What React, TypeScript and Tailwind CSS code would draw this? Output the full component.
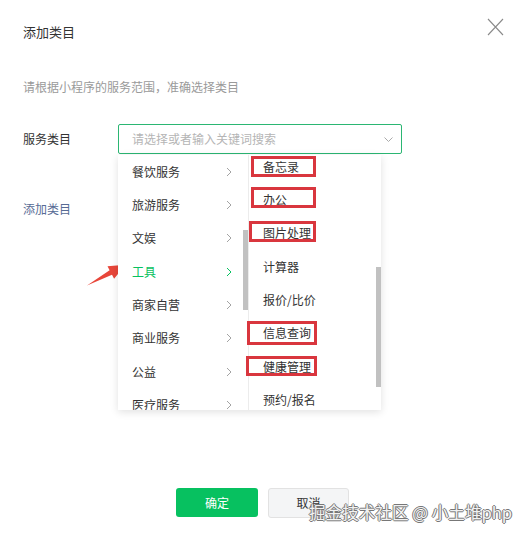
import React from "react";

const leftItems = ["餐饮服务", "旅游服务", "文娱", "工具", "商家自营", "商业服务", "公益", "医疗服务"];

type RightItem = { label: string; box?: string };
const rightItems: RightItem[] = [
  { label: "备忘录", box: "-left-[12px] -right-[17px] -top-[3px] -bottom-[2px]" },
  { label: "办公", box: "-left-[12px] -right-[29px] -top-[5px] bottom-0" },
  { label: "图片处理", box: "-left-[14px] -right-[5px] -top-[4px] -bottom-[1px]" },
  { label: "计算器" },
  { label: "报价/比价" },
  { label: "信息查询", box: "-left-[16px] -right-[6px] -top-[4px] -bottom-[4px]" },
  { label: "健康管理", box: "-left-[17px] -right-[6px] -top-[3px] -bottom-[1px]" },
  { label: "预约/报名" },
];

function Chevron({ active }: { active?: boolean }) {
  return (
    <svg width="6" height="10" viewBox="0 0 6 10" className="shrink-0">
      <path d="M1 1 L5 5 L1 9" fill="none" stroke={active ? "#07c160" : "#a3a3a3"} strokeWidth="1" />
    </svg>
  );
}

export default function App() {
  return (
    <div
      className="relative w-[528px] h-[536px] bg-white overflow-hidden text-[#333]"
      style={{ fontFamily: '"Noto Sans CJK SC", "Noto Sans", sans-serif' }}
    >
      {/* close */}
      <button className="absolute left-[487px] top-[18px] w-[17px] h-[18px]">
        <svg width="17" height="18" viewBox="0 0 17 18">
          <path d="M1 1 L16 17 M16 1 L1 17" stroke="#8a8a8a" strokeWidth="1.1" fill="none" />
        </svg>
      </button>

      <div className="pl-[23px] pt-[22px] flex flex-col">
        <div className="text-[13px] leading-[20px] text-[#333]">添加类目</div>
        <div className="mt-[36px] text-[12px] leading-[18px] text-[#9a9a9a]">请根据小程序的服务范围，准确选择类目</div>

        <div className="mt-[28px] flex items-center">
          <div className="w-[95px] text-[12px] leading-[18px] text-[#333]">服务类目</div>
          <div className="relative w-[284px]">
            <div className="h-[30px] border border-[#2bb673] rounded-[2px] flex items-center justify-between pl-[13px] pr-[8px]">
              <span className="text-[12px] text-[#b5b5b5]">请选择或者输入关键词搜索</span>
              <svg width="9" height="5" viewBox="0 0 9 5">
                <path d="M0.5 0.5 L4.5 4.5 L8.5 0.5" stroke="#aaa" strokeWidth="1" fill="none" />
              </svg>
            </div>

            {/* dropdown */}
            <div className="absolute left-0 top-[31px] z-10 w-[263px] h-[255px] bg-white flex overflow-hidden shadow-[0_2px_8px_rgba(0,0,0,0.12)]">
              <div className="relative w-[131px] h-full overflow-hidden border-r border-[#ececec]">
                {leftItems.map((it) => {
                  const active = it === "工具";
                  return (
                    <div
                      key={it}
                      className="h-[33.33px] flex items-center justify-between pl-[14px] pr-[16px] text-[12px]"
                    >
                      <span className={active ? "text-[#07c160]" : "text-[#333]"}>{it}</span>
                      <Chevron active={active} />
                    </div>
                  );
                })}
                <div className="absolute right-0 top-[75px] w-[5px] h-[80px] bg-[#c1c1c1]" />
              </div>
              <div className="relative w-[132px] h-full">
                <div className="mt-[-5px]">
                  {rightItems.map((it) => (
                    <div key={it.label} className="h-[33.33px] flex items-center pl-[14px] text-[12px] text-[#333]">
                      <span className="relative leading-[16px]">
                        {it.label}
                        {it.box && (
                          <span className={"absolute border-[3px] border-[#d9363e] " + it.box} />
                        )}
                      </span>
                    </div>
                  ))}
                </div>
                <div className="absolute right-0 top-[112px] w-[5px] h-[120px] bg-[#c1c1c1]" />
              </div>
            </div>
          </div>
        </div>

        <div className="mt-[46px] text-[12px] leading-[18px] text-[#576b95]">添加类目</div>

        <div className="mt-[270px] ml-[153px] flex gap-[10px]">
          <button className="w-[82px] h-[29px] rounded-[3px] bg-[#07c160] text-white text-[12px] flex items-center justify-center">
            确定
          </button>
          <button className="w-[81px] h-[30px] rounded-[3px] bg-[#f4f5f6] border border-[#e2e2e2] text-[#333] text-[12px] flex items-center justify-center">
            取消
          </button>
        </div>
      </div>

      {/* annotation arrow */}
      <svg className="absolute left-0 top-0 pointer-events-none" width="528" height="536">
        <polygon
          points="87,285.5 109.6,270.3 107.5,266.3 125.5,264.8 114.1,278.7 112,274.7"
          fill="#e8463a"
        />
      </svg>

      {/* watermark */}
      <div className="absolute left-[309px] top-[501px] text-[16.6px] leading-[22px] text-[#f2f2f2] whitespace-nowrap [text-shadow:1px_0_0_#777,-1px_0_0_#777,0_1px_0_#777,0_-1px_0_#777]">
        掘金技术社区 @ 小土堆php
      </div>
    </div>
  );
}
